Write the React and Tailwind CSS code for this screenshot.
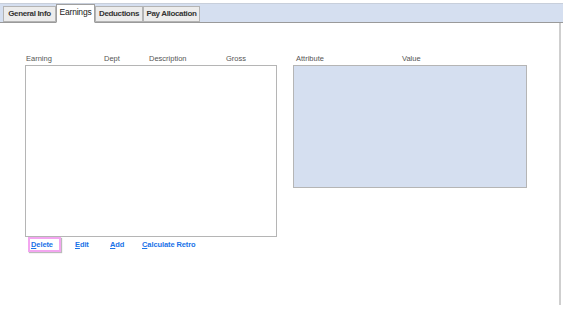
import { useState } from "react";

const tabs = [
  { name: "General Info", w: "w-[53px]" },
  { name: "Earnings", w: "w-[39px]" },
  { name: "Deductions", w: "w-[48px]" },
  { name: "Pay Allocation", w: "w-[57px]" },
];

const links = [
  { label: "Delete", w: "w-[33px]", focused: true },
  { label: "Edit", w: "w-[35px]", ml: "ml-[11px]" },
  { label: "Add", w: "w-[32px]" },
  { label: "Calculate Retro", w: "w-[70px]" },
];

function LinkButton({ label, w, ml = "", focused }) {
  return (
    <button
      className={`${w} ${ml} h-[15px] text-left pl-[1px] text-[7.5px] font-bold text-[#1a73e8] leading-[11px] tracking-[-0.1px] ${
        focused ? "border-2 border-[#f3a6f0] shadow-[1px_1px_1px_#bbb]" : "border-2 border-transparent"
      }`}
    >
      <span className="underline">{label[0]}</span>
      {label.slice(1)}
    </button>
  );
}

function App() {
  const [active, setActive] = useState("Earnings");

  return (
    <div
      className="w-[574px] h-[311px] bg-white overflow-hidden"
      style={{ fontFamily: '"Liberation Sans", Arial, sans-serif' }}
    >
      <div className="pt-[3px]">
        {/* tab strip */}
        <div className="w-[563px] h-[20px] bg-[#d5dff0] border-t border-[#c8cfdb] flex items-end pl-[3px] border-b border-b-[#9a9a9a]">
          {tabs.map((t) => {
            const isActive = t.name === active;
            return (
              <button
                key={t.name}
                onClick={() => setActive(t.name)}
                className={
                  isActive
                    ? `${t.w} h-[19px] mb-[-1px] bg-white border border-[#a0a0a0] border-b-white text-[8.5px] text-[#222] leading-none pb-[3px] whitespace-nowrap tracking-[-0.2px]`
                    : `${t.w} h-[16px] bg-[#ececec] border border-[#b4b4b4] text-[8px] font-bold text-[#333] leading-none whitespace-nowrap tracking-[-0.35px]`
                }
              >
                {t.name}
              </button>
            );
          })}
        </div>

        {/* content panel */}
        <div className="w-[561px] h-[282px] border-r-2 border-[#cfcfcf] flex gap-[16px] pl-[25px] pt-[30px]">
          <div className="flex flex-col">
            <div className="flex text-[7.5px] text-[#555] h-[11px] pl-[1px]">
              <span className="w-[78px]">Earning</span>
              <span className="w-[45px]">Dept</span>
              <span className="w-[77px]">Description</span>
              <span>Gross</span>
            </div>
            <div className="w-[252px] h-[172px] border border-[#b5b5b5] bg-white mt-[1px]" />
            <div className="flex items-center ml-[3px]">
              {links.map((l) => (
                <LinkButton key={l.label} {...l} />
              ))}
            </div>
          </div>
          <div className="flex flex-col">
            <div className="flex text-[7.5px] text-[#555] h-[11px] pl-[3px]">
              <span className="w-[106px]">Attribute</span>
              <span>Value</span>
            </div>
            <div className="w-[234px] h-[123px] border border-[#b5b5b5] bg-[#d5dff0] mt-[1px]" />
          </div>
        </div>
      </div>
    </div>
  );
}

export default App;
